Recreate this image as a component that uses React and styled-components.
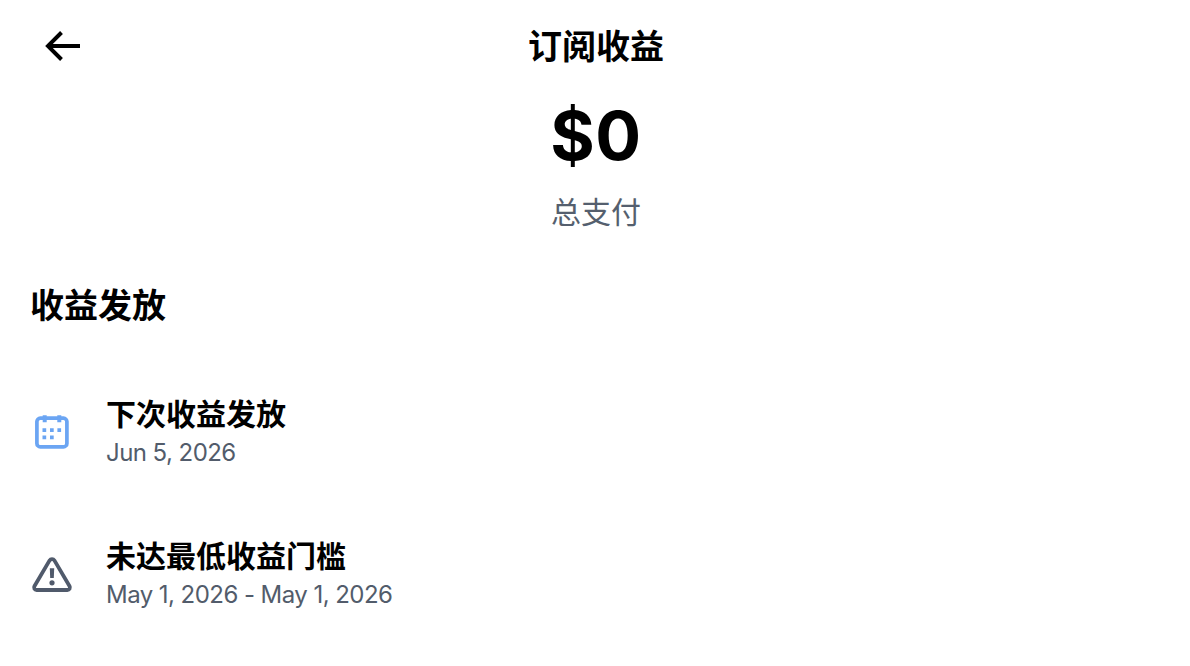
import React from 'react';
import styled, { createGlobalStyle } from 'styled-components';

const GlobalStyle = createGlobalStyle`
  body {
    margin: 0;
    background: #fff;
    color: #000;
    font-family: Inter, 'Noto Sans CJK SC', sans-serif;
  }
`;

const Page = styled.main`
  box-sizing: border-box;
  height: 666px;
  overflow: hidden;
`;

const Header = styled.header`
  display: grid;
  grid-template-columns: 1fr auto 1fr;
  align-items: center;
  height: 92px;
  padding: 0 36px 0 38px;
`;

const BackButton = styled.button`
  display: flex;
  width: 48px;
  padding: 0;
  border: 0;
  background: transparent;
  color: #000;
  cursor: pointer;
`;

const Title = styled.h1`
  margin: 0 0 2px;
  font-family: 'Noto Sans CJK SC', sans-serif;
  font-size: 34px;
  font-weight: 700;
  line-height: 48px;
`;

const Summary = styled.section`
  display: flex;
  flex-direction: column;
  align-items: center;
  padding-left: 2px;
`;

const Amount = styled.div`
  height: 84px;
  font-size: 68px;
  font-weight: 700;
  line-height: 86px;
  letter-spacing: 0.5px;
`;

const Caption = styled.div`
  margin-top: 14px;
  color: #555f6e;
  font-family: 'Noto Sans CJK SC', sans-serif;
  font-size: 30px;
  line-height: 40px;
`;

const SectionTitle = styled.h2`
  margin: 50px 0 0 30px;
  font-family: 'Noto Sans CJK SC', sans-serif;
  font-size: 34px;
  font-weight: 700;
  line-height: 48px;
`;

const List = styled.div`
  display: flex;
  flex-direction: column;
  gap: 62px;
  padding: 64px 30px 0;
`;

const Row = styled.div`
  display: flex;
  align-items: flex-start;
  gap: 32px;
  height: 80px;
`;

const IconBox = styled.div`
  display: flex;
  flex: none;
  align-self: center;
  width: 44px;
  color: ${(props) => props.$color};
`;

const RowTitle = styled.h3`
  margin: 0;
  font-family: 'Noto Sans CJK SC', sans-serif;
  font-size: 30px;
  font-weight: 700;
  line-height: 40px;
`;

const RowDate = styled.p`
  margin: 0;
  color: #525c6b;
  font-size: 24px;
  line-height: 42px;
  letter-spacing: -0.55px;
`;

function ArrowIcon() {
  return (
    <svg width='48' height='48' viewBox='0 0 24 24' fill='currentColor'>
      <path d='M7.414 13l5.043 5.04-1.414 1.42L3.586 12l7.457-7.46 1.414 1.42L7.414 11H21v2H7.414z' />
    </svg>
  );
}

function CalendarIcon() {
  return (
    <svg width='44' height='44' viewBox='0 0 44 44' fill='none'>
      <rect
        x='6.9'
        y='8.2'
        width='30'
        height='28.6'
        rx='3.4'
        stroke='currentColor'
        strokeWidth='3.7'
      />
      <path
        d='M14.7 5.3v7M29.3 5.3v7'
        stroke='currentColor'
        strokeWidth='4'
      />
      <path
        d='M12.5 18.2h3.7v3.7h-3.7zM20 18.2h3.7v3.7H20zM27.4 18.2h3.7v3.7h-3.7zM12.5 25.6h3.7v3.7h-3.7zM20 25.6h3.7v3.7H20z'
        fill='currentColor'
      />
    </svg>
  );
}

function WarningIcon() {
  return (
    <svg width='44' height='44' viewBox='0 0 44 44' fill='none'>
      <path
        d='M19.6 8.4 4.4 34.3c-1 1.7.2 3.7 2.2 3.7h30.8c2 0 3.2-2 2.2-3.7L24.4 8.4c-1.1-1.8-3.7-1.8-4.8 0z'
        stroke='currentColor'
        strokeWidth='3.8'
      />
      <path d='M19.8 16.3h4.4l-.4 9.7h-3.6z' fill='currentColor' />
      <circle cx='22' cy='30.8' r='2.6' fill='currentColor' />
    </svg>
  );
}

function PayoutRow({ icon, color, title, date }) {
  return (
    <Row>
      <IconBox $color={color}>{icon}</IconBox>
      <div>
        <RowTitle>{title}</RowTitle>
        <RowDate>{date}</RowDate>
      </div>
    </Row>
  );
}

function App() {
  return (
    <>
      <GlobalStyle />
      <Page>
        <Header>
          <BackButton aria-label='返回'>
            <ArrowIcon />
          </BackButton>
          <Title>订阅收益</Title>
        </Header>
        <Summary>
          <Amount>$0</Amount>
          <Caption>总支付</Caption>
        </Summary>
        <SectionTitle>收益发放</SectionTitle>
        <List>
          <PayoutRow
            icon={<CalendarIcon />}
            color='#6ba5f3'
            title='下次收益发放'
            date='Jun 5, 2026'
          />
          <PayoutRow
            icon={<WarningIcon />}
            color='#505a6b'
            title='未达最低收益门槛'
            date='May 1, 2026 - May 1, 2026'
          />
        </List>
      </Page>
    </>
  );
}

export default App;
